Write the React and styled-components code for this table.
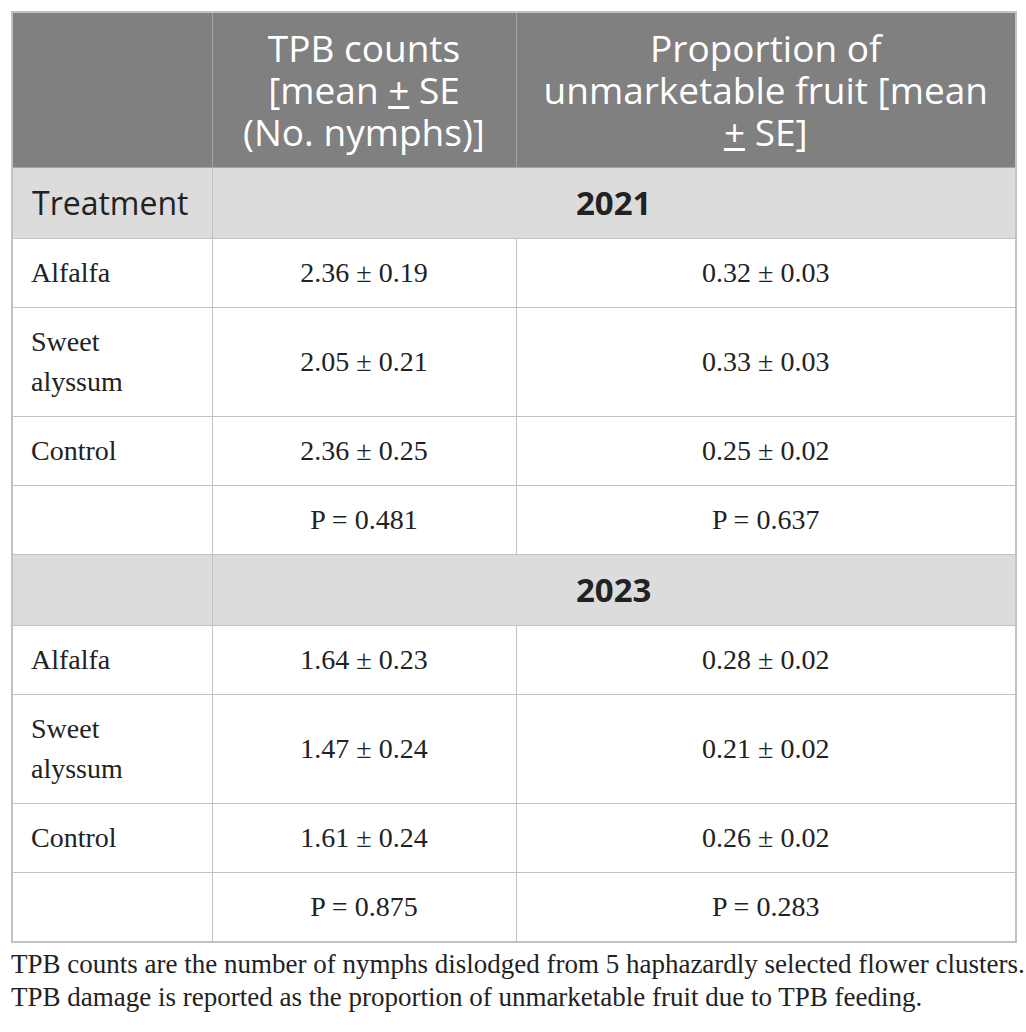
import React from 'react'
import styled, { createGlobalStyle } from 'styled-components'

const GlobalStyle = createGlobalStyle`
  html, body {
    margin: 0;
    padding: 0;
    background: #ffffff;
  }
`

const Page = styled.div`
  padding: 11px 11px 0 11px;
  width: 1004px;
`

const Table = styled.table`
  width: 1004px;
  table-layout: fixed;
  border-collapse: collapse;
  border: 2px solid #c2c2c2;
`

const HeadCell = styled.th`
  background: #7f807f;
  color: #ffffff;
  font-family: "Open Sans", "Liberation Sans", sans-serif;
  font-weight: 400;
  font-size: 37px;
  line-height: 42px;
  padding: 14px 10px;
  text-align: center;
  border: 1px solid #a3a4a3;
  vertical-align: middle;
`

const SubHeadCell = styled.td`
  background: #dcdcdc;
  color: #222222;
  font-family: "Open Sans", "Liberation Sans", sans-serif;
  font-size: ${(p) => (p.$bold ? '33px' : '32px')};
  font-weight: ${(p) => (p.$bold ? 700 : 400)};
  line-height: 40px;
  padding: 15px 19px;
  text-align: ${(p) => (p.$center ? 'center' : 'left')};
  border: 1px solid #c2c2c2;
`

const Cell = styled.td`
  color: #222222;
  font-family: "Liberation Serif", "Times New Roman", serif;
  font-size: 28px;
  line-height: 40px;
  padding: 14px 18px;
  text-align: ${(p) => (p.$label ? 'left' : 'center')};
  border: 1px solid #c2c2c2;
`

const Footnote = styled.div`
  margin-top: 5px;
  color: #222222;
  font-family: "Liberation Serif", "Times New Roman", serif;
  font-size: 27px;
  line-height: 33px;
  white-space: nowrap;
`

const years = [
  {
    year: '2021',
    label: 'Treatment',
    rows: [
      ['Alfalfa', '2.36 ± 0.19', '0.32 ± 0.03'],
      [<>Sweet<br />alyssum</>, '2.05 ± 0.21', '0.33 ± 0.03'],
      ['Control', '2.36 ± 0.25', '0.25 ± 0.02'],
      ['', 'P = 0.481', 'P = 0.637'],
    ],
  },
  {
    year: '2023',
    label: '',
    rows: [
      ['Alfalfa', '1.64 ± 0.23', '0.28 ± 0.02'],
      [<>Sweet<br />alyssum</>, '1.47 ± 0.24', '0.21 ± 0.02'],
      ['Control', '1.61 ± 0.24', '0.26 ± 0.02'],
      ['', 'P = 0.875', 'P = 0.283'],
    ],
  },
]

export default function App() {
  return (
    <>
      <GlobalStyle />
      <Page>
        <Table>
          <colgroup>
            <col style={{ width: 200 }} />
            <col style={{ width: 304 }} />
            <col style={{ width: 500 }} />
          </colgroup>
          <thead>
            <tr>
              <HeadCell />
              <HeadCell>
                TPB counts<br />[mean <u>+</u> SE<br />(No. nymphs)]
              </HeadCell>
              <HeadCell>
                Proportion of<br />unmarketable fruit [mean<br /><u>+</u> SE]
              </HeadCell>
            </tr>
          </thead>
          <tbody>
            {years.map((group) => (
              <React.Fragment key={group.year}>
                <tr>
                  <SubHeadCell>{group.label}</SubHeadCell>
                  <SubHeadCell colSpan={2} $center $bold>{group.year}</SubHeadCell>
                </tr>
                {group.rows.map((row, i) => (
                  <tr key={i}>
                    <Cell $label>{row[0]}</Cell>
                    <Cell>{row[1]}</Cell>
                    <Cell>{row[2]}</Cell>
                  </tr>
                ))}
              </React.Fragment>
            ))}
          </tbody>
        </Table>
        <Footnote>
          TPB counts are the number of nymphs dislodged from 5 haphazardly selected flower clusters.
          <br />
          TPB damage is reported as the proportion of unmarketable fruit due to TPB feeding.
        </Footnote>
      </Page>
    </>
  )
}
